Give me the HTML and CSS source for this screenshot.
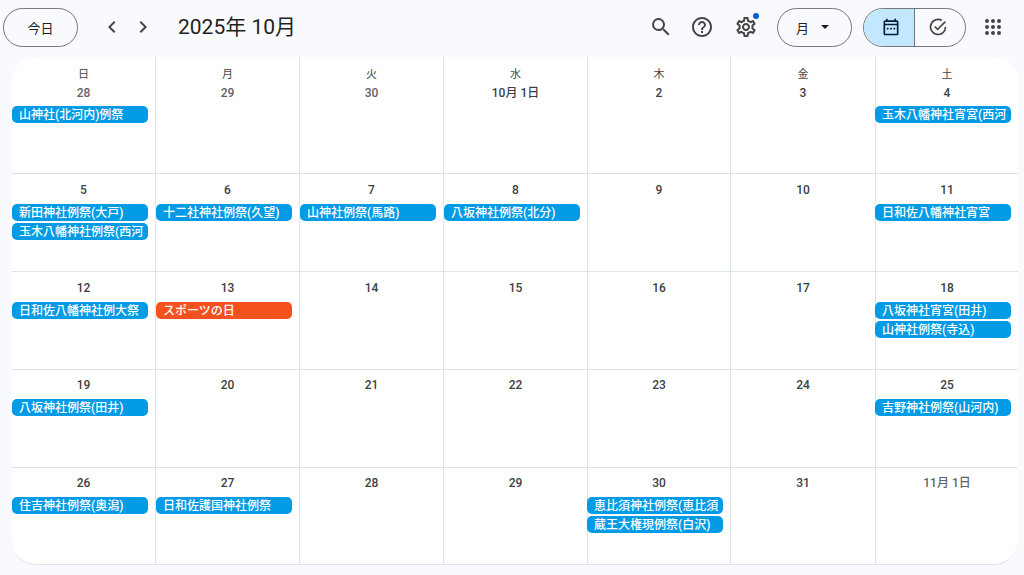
FILE: index.html
```html
<!DOCTYPE html>
<html lang="ja">
<head>
<meta charset="utf-8">
<title>カレンダー</title>
<link rel="stylesheet" href="styles.css">
</head>
<body>
<header class="topbar">
  <button class="pill today">今日</button>
  <div class="navs">
    <svg class="ic" viewBox="0 0 24 24"><path d="M15.4 7.4 14 6l-6 6 6 6 1.4-1.4L10.800 12z"/></svg>
    <svg class="ic" viewBox="0 0 24 24"><path d="M8.600 7.400 10 6l6 6-6 6-1.400-1.400 4.600-4.600z"/></svg>
  </div>
  <h1 class="title">2025年 10月</h1>
  <div class="spacer"></div>
  <div class="tools">
    <svg class="tool" viewBox="0 0 24 24"><path d="M15.500 14h-.79l-.28-.27A6.471 6.471 0 0 0 16 9.500 6.500 6.500 0 1 0 9.500 16c1.610 0 3.090-.59 4.230-1.570l.27.28v.79l5 4.990L20.490 19l-4.990-5zm-6 0C7.010 14 5 11.990 5 9.500S7.010 5 9.500 5 14 7.010 14 9.500 11.990 14 9.500 14z"/></svg>
    <svg class="tool" viewBox="0 0 24 24"><path d="M11 18h2v-2h-2v2zm1-16C6.480 2 2 6.480 2 12s4.480 10 10 10 10-4.480 10-10S17.520 2 12 2zm0 18c-4.410 0-8-3.590-8-8s3.590-8 8-8 8 3.590 8 8-3.590 8-8 8zm0-14c-2.210 0-4 1.790-4 4h2c0-1.100.9-2 2-2s2 .9 2 2c0 2-3 1.750-3 5h2c0-2.250 3-2.500 3-5 0-2.210-1.790-4-4-4z"/></svg>
    <span class="gear">
      <svg class="tool" viewBox="0 0 24 24"><path d="M19.430 12.980c.04-.32.07-.64.07-.98 0-.34-.03-.66-.07-.98l2.110-1.650c.19-.15.24-.42.12-.64l-2-3.460a.5.5 0 0 0-.61-.22l-2.490 1c-.52-.4-1.080-.73-1.690-.98l-.38-2.650A.488.488 0 0 0 14 2h-4c-.25 0-.46.18-.49.42l-.38 2.650c-.61.25-1.170.59-1.690.98l-2.490-1a.566.566 0 0 0-.18-.03c-.17 0-.34.09-.43.25l-2 3.460c-.13.22-.07.49.12.64l2.110 1.650c-.04.32-.07.65-.07.98 0 .33.03.66.07.98l-2.110 1.650c-.19.15-.24.42-.12.64l2 3.460a.5.5 0 0 0 .61.22l2.490-1c.52.4 1.080.73 1.690.98l.38 2.650c.03.24.24.42.49.42h4c.25 0 .46-.18.49-.42l.38-2.650c.61-.25 1.170-.59 1.690-.98l2.490 1c.06.02.12.03.18.03.17 0 .34-.09.43-.25l2-3.460c.12-.22.07-.49-.12-.64l-2.110-1.650zm-1.980-1.710c.04.31.05.52.05.73 0 .21-.02.43-.05.73l-.14 1.130.89.7 1.080.84-.7 1.210-1.270-.51-1.040-.42-.9.68c-.43.32-.84.56-1.250.73l-1.060.43-.16 1.130-.2 1.350h-1.400l-.19-1.350-.16-1.130-1.060-.43c-.43-.18-.83-.41-1.230-.71l-.91-.7-1.060.43-1.270.51-.7-1.210 1.080-.84.89-.7-.14-1.130c-.03-.31-.05-.54-.05-.74s.02-.43.05-.73l.14-1.130-.89-.7-1.080-.84.7-1.210 1.270.51 1.040.42.9-.68c.43-.32.84-.56 1.250-.73l1.060-.43.16-1.130.2-1.350h1.390l.19 1.350.16 1.130 1.060.43c.43.18.83.41 1.230.71l.91.7 1.060-.43 1.270-.51.7 1.210-1.070.85-.89.7.14 1.130zM12 8c-2.210 0-4 1.790-4 4s1.790 4 4 4 4-1.790 4-4-1.790-4-4-4zm0 6c-1.100 0-2-.9-2-2s.9-2 2-2 2 .9 2 2-.9 2-2 2z"/></svg>
      <i class="dot"></i>
    </span>
  </div>
  <button class="pill month">月<svg class="caret" viewBox="0 0 10 5"><path d="M0 0h10L5 5z"/></svg></button>
  <div class="toggle">
    <span class="seg on">
      <svg class="segic" viewBox="0 0 24 24"><path d="M19 4h-1V2h-2v2H8V2H6v2H5a2 2 0 0 0-2 2v14a2 2 0 0 0 2 2h14a2 2 0 0 0 2-2V6a2 2 0 0 0-2-2zm0 16H5V10h14v10zm0-12H5V6h14v2zM7 13h2v2H7zm4 0h2v2h-2zm4 0h2v2h-2z"/></svg>
    </span>
    <span class="seg off">
      <svg class="segic" viewBox="0 0 24 24"><path d="M21.500 6.300 11.500 16.300 7.300 12.100l1.400-1.400 2.800 2.800 8.600-8.600zM12 20a8 8 0 1 1 3.700-15.100l1.500-1.500A10 10 0 1 0 22 12h-2a8 8 0 0 1-8 8z"/></svg>
    </span>
  </div>
  <svg class="apps" viewBox="0 0 18 18"><circle cx="3" cy="3" r="2"/><circle cx="9" cy="3" r="2"/><circle cx="15" cy="3" r="2"/><circle cx="3" cy="9" r="2"/><circle cx="9" cy="9" r="2"/><circle cx="15" cy="9" r="2"/><circle cx="3" cy="15" r="2"/><circle cx="9" cy="15" r="2"/><circle cx="15" cy="15" r="2"/></svg>
</header>
<main class="cal">
  <section class="cell first"><div class="dow">日</div><div class="num">28</div><div class="ev">山神社(北河内)例祭</div></section>
  <section class="cell first"><div class="dow">月</div><div class="num">29</div></section>
  <section class="cell first"><div class="dow">火</div><div class="num">30</div></section>
  <section class="cell first"><div class="dow">水</div><div class="num strong">10月 1日</div></section>
  <section class="cell first"><div class="dow">木</div><div class="num strong">2</div></section>
  <section class="cell first"><div class="dow">金</div><div class="num strong">3</div></section>
  <section class="cell first"><div class="dow">土</div><div class="num strong">4</div><div class="ev">玉木八幡神社宵宮(西河</div></section>

  <section class="cell"><div class="num strong">5</div><div class="ev">新田神社例祭(大戸)</div><div class="ev">玉木八幡神社例祭(西河</div></section>
  <section class="cell"><div class="num strong">6</div><div class="ev">十二社神社例祭(久望)</div></section>
  <section class="cell"><div class="num strong">7</div><div class="ev">山神社例祭(馬路)</div></section>
  <section class="cell"><div class="num strong">8</div><div class="ev">八坂神社例祭(北分)</div></section>
  <section class="cell"><div class="num strong">9</div></section>
  <section class="cell"><div class="num strong">10</div></section>
  <section class="cell"><div class="num strong">11</div><div class="ev">日和佐八幡神社宵宮</div></section>

  <section class="cell"><div class="num strong">12</div><div class="ev">日和佐八幡神社例大祭</div></section>
  <section class="cell"><div class="num strong">13</div><div class="ev holiday">スポーツの日</div></section>
  <section class="cell"><div class="num strong">14</div></section>
  <section class="cell"><div class="num strong">15</div></section>
  <section class="cell"><div class="num strong">16</div></section>
  <section class="cell"><div class="num strong">17</div></section>
  <section class="cell"><div class="num strong">18</div><div class="ev">八坂神社宵宮(田井)</div><div class="ev">山神社例祭(寺込)</div></section>

  <section class="cell"><div class="num strong">19</div><div class="ev">八坂神社例祭(田井)</div></section>
  <section class="cell"><div class="num strong">20</div></section>
  <section class="cell"><div class="num strong">21</div></section>
  <section class="cell"><div class="num strong">22</div></section>
  <section class="cell"><div class="num strong">23</div></section>
  <section class="cell"><div class="num strong">24</div></section>
  <section class="cell"><div class="num strong">25</div><div class="ev">吉野神社例祭(山河内)</div></section>

  <section class="cell last"><div class="num strong">26</div><div class="ev">住吉神社例祭(奥潟)</div></section>
  <section class="cell last"><div class="num strong">27</div><div class="ev">日和佐護国神社例祭</div></section>
  <section class="cell last"><div class="num strong">28</div></section>
  <section class="cell last"><div class="num strong">29</div></section>
  <section class="cell last"><div class="num strong">30</div><div class="ev">恵比須神社例祭(恵比須</div><div class="ev">蔵王大権現例祭(白沢)</div></section>
  <section class="cell last"><div class="num strong">31</div></section>
  <section class="cell last"><div class="num">11月 1日</div></section>
</main>
</body>
</html>
```
FILE: styles.css
```css
* { box-sizing: border-box; }
html, body { margin: 0; height: 100%; }
body {
  width: 1024px;
  height: 575px;
  overflow: hidden;
  background: #f8fafd;
  font-family: Roboto, "Noto Sans CJK JP", sans-serif;
  color: #1f1f1f;
}
.topbar {
  height: 57px;
  display: flex;
  align-items: center;
  padding: 0 0 3px 3px;
}
.pill {
  height: 39px;
  border: 1px solid #747775;
  border-radius: 20px;
  background: transparent;
  font-family: inherit;
  font-size: 13px;
  font-weight: 400;
  color: #1f1f1f;
  padding: 0;
}
.today { width: 75px; }
.navs { display: flex; gap: 7px; margin-left: 22px; }
.ic { width: 24px; height: 24px; fill: #444746; }
.title {
  margin: 0 0 0 23px;
  font-size: 21px;
  font-weight: 400;
  line-height: 28px;
  color: #1f1f1f;
}
.spacer { flex: 1; }
.tools { display: flex; gap: 17px; align-items: center; }
.tool { width: 24px; height: 24px; fill: #444746; display: block; }
.gear { position: relative; display: block; margin-left: 3px; }
.dot {
  position: absolute;
  right: -1px;
  top: -2px;
  width: 6px;
  height: 6px;
  border-radius: 50%;
  background: #0b57d0;
}
.month {
  width: 75px;
  margin-left: 19px;
  display: flex;
  align-items: center;
  justify-content: center;
  gap: 12px;
  padding-right: 4px;
}
.caret { width: 8px; height: 4px; fill: #1f1f1f; }
.toggle {
  display: flex;
  width: 103px;
  height: 39px;
  margin-left: 11px;
  border: 1px solid #747775;
  border-radius: 20px;
  overflow: hidden;
}
.seg { flex: 1; display: flex; align-items: center; justify-content: center; }
.seg.on { background: #c2e7ff; border-right: 1px solid #747775; padding-left: 4px; }
.seg.off { padding-right: 4px; }
.segic { width: 20px; height: 20px; fill: #444746; }
.seg.on .segic { fill: #001d35; }
.apps { width: 18px; height: 18px; fill: #444746; margin: 0 22px 0 18px; }
.cal {
  width: 1006px;
  height: 508px;
  margin-left: 12px;
  display: grid;
  grid-template-columns: repeat(4, 144px) 143px 145px 1fr;
  grid-template-rows: 117px repeat(4, 98px);
  background: #fff;
  border-radius: 24px;
  overflow: hidden;
  border-bottom: 1px solid #dde3ea;
}
.cell {
  border-right: 1px solid #dde3ea;
  border-bottom: 1px solid #dde3ea;
  padding-top: 8px;
  min-width: 0;
  text-align: center;
}
.cell:nth-child(n+22) { padding-top: 7px; }
.cell:nth-child(7n) { border-right: 0; }
.cell.last { border-bottom: 0; }
.cell.first { padding-top: 10px; }
.cell:nth-child(7n) .ev,
.cell:nth-child(7n+5) .ev { margin-left: -1px; }
.dow {
  font-size: 11px;
  font-weight: 400;
  line-height: 15px;
  margin-bottom: 3px;
  color: #444746;
}
.num {
  font-size: 12px;
  font-weight: 500;
  line-height: 16px;
  color: #5f6368;
}
.num.strong { color: #3c4043; }
.ev {
  width: 136px;
  height: 17px;
  margin-top: 6px;
  padding: 1px 0 0 7px;
  border-radius: 5px;
  background: #039be5;
  color: #fff;
  font-size: 12px;
  font-weight: 500;
  line-height: 16px;
  text-align: left;
  white-space: nowrap;
  overflow: hidden;
}
.first .ev { margin-top: 5px; }
.ev + .ev { margin-top: 2px; }
.ev.holiday { background: #f4511e; }
```
